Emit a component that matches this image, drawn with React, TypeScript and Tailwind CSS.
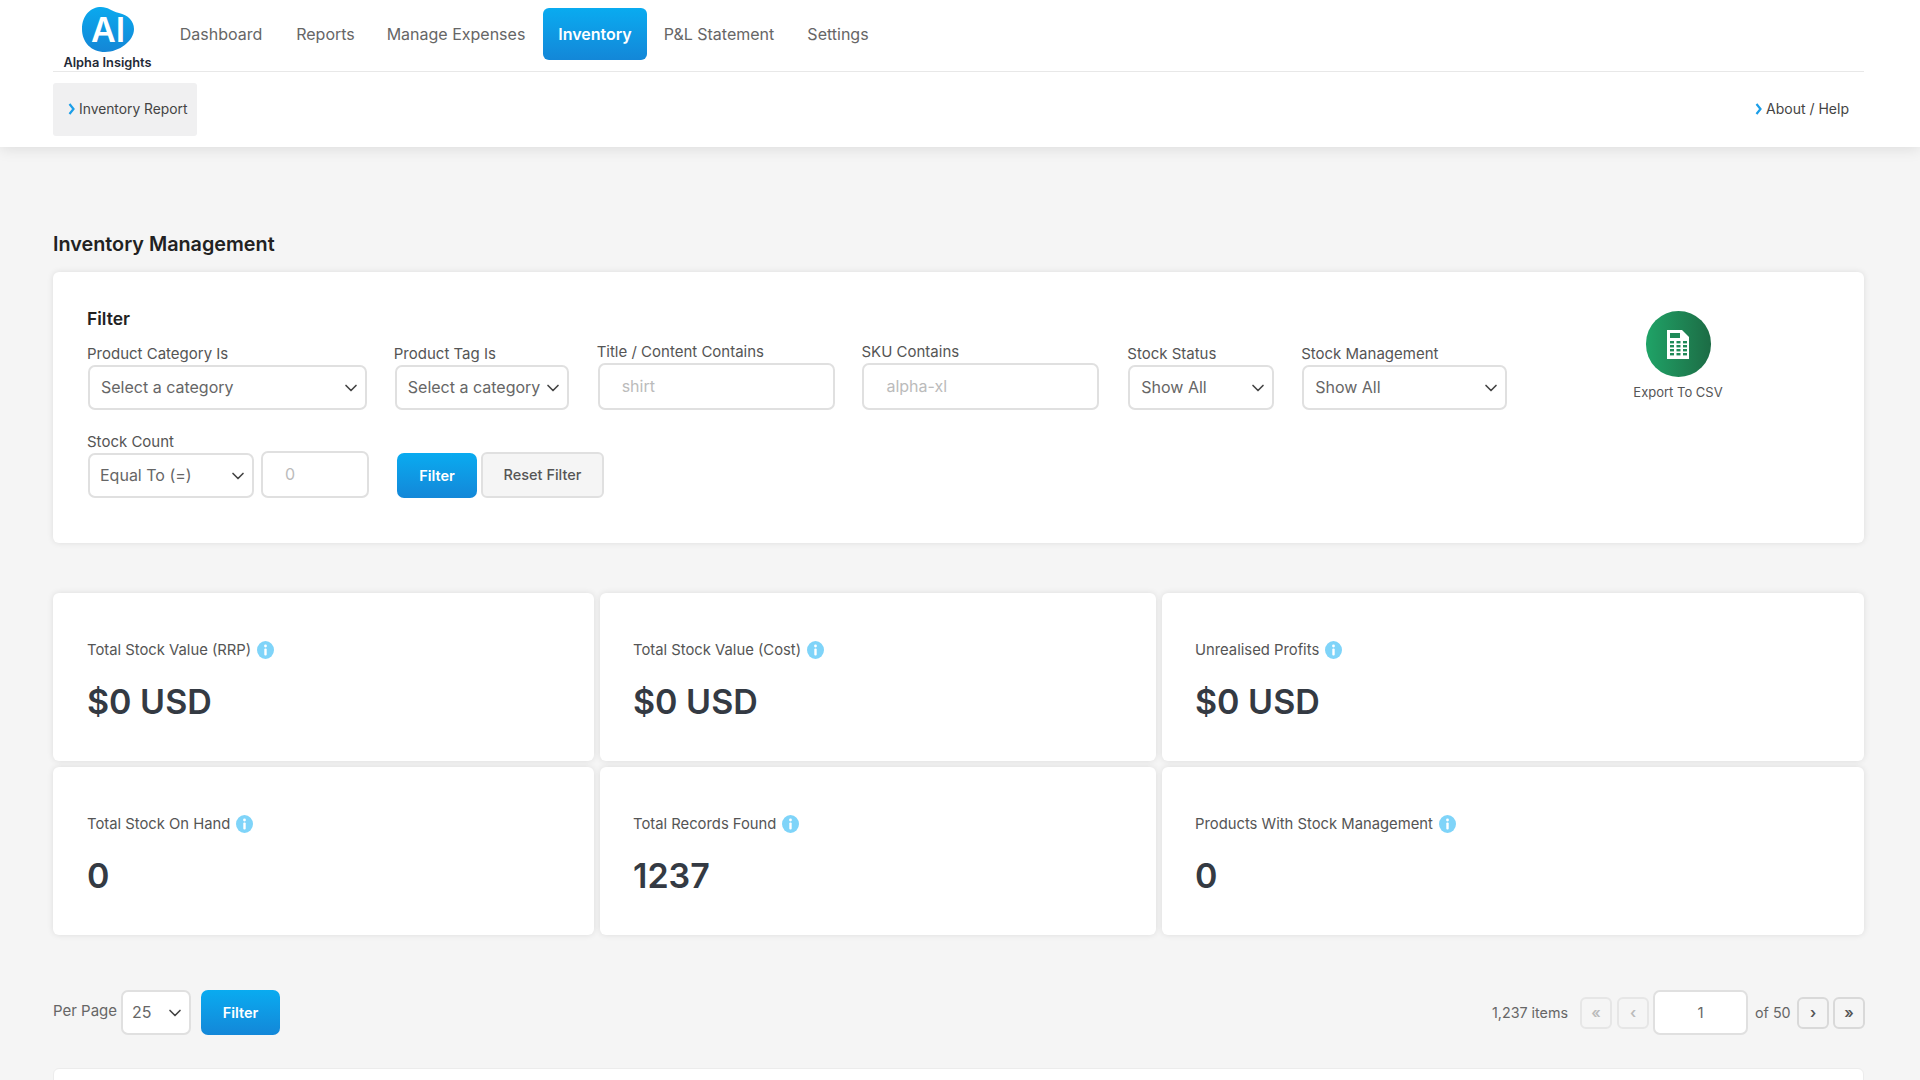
import { ChevronDown } from "lucide-react"

const font = "font-['Inter','Noto_Sans',sans-serif]"

function Logo() {
  return (
    <div className="w-[109px] shrink-0 flex flex-col items-center pt-[7px]">
      <svg width="53" height="45" viewBox="0 0 53 45" className="shrink-0">
        <defs>
          <linearGradient id="blob" x1="0" y1="0" x2="0" y2="1">
            <stop offset="0" stopColor="#0aa9ee" />
            <stop offset="1" stopColor="#1486d6" />
          </linearGradient>
        </defs>
        <path d="M1 22C1 8 10 0 20 0c7 0 10 4 18 6 9 2 15 8 15 16 0 12-15 23-29 23C10 45 1 35 1 22z" fill="url(#blob)" />
        <text x="27" y="35" textAnchor="middle" fontFamily="Inter, sans-serif" fontSize="34" fontWeight="600" fill="#fff">AI</text>
      </svg>
      <span className="mt-[2px] shrink-0 text-[12.8px] leading-[18px] font-semibold text-[#1f2a37] whitespace-nowrap">Alpha Insights</span>
    </div>
  )
}

function Caret() {
  return (
    <svg width="7" height="12" viewBox="0 0 7 12" className="shrink-0 mr-[4px]">
      <path d="M1.5 1l4 5-4 5" fill="none" stroke="#1b9ee8" strokeWidth="2.2" />
    </svg>
  )
}

function Label({ children }: { children: string }) {
  return <div className="-ml-px h-5 mb-px text-[15px] leading-5 text-[#555] whitespace-nowrap">{children}</div>
}

function Select({ value, className }: { value: string; className: string }) {
  return (
    <div className={`relative h-[45px] rounded-[7px] border-2 border-[#e0e0e0] bg-white flex items-center pb-[2px] ${className}`}>
      <span className="text-[16px] text-[#666] whitespace-nowrap">{value}</span>
      <ChevronDown size={20} strokeWidth={2} className="absolute right-[4px] top-[11px] text-[#444]" />
    </div>
  )
}

function TextInput({ placeholder, className }: { placeholder: string; className: string }) {
  return (
    <input
      placeholder={placeholder}
      className={`h-[47px] rounded-[7px] border-2 border-[#e0e0e0] bg-white text-[16px] pb-[2px] outline-none placeholder:text-[#bbb] ${className}`}
    />
  )
}

function BlueButton({ className }: { className: string }) {
  return (
    <button className={`rounded-[7px] bg-gradient-to-b from-[#09abf0] to-[#1387d8] text-white text-[14.5px] font-semibold ${className}`}>
      Filter
    </button>
  )
}

function Info() {
  return (
    <svg width="17" height="18" viewBox="0 0 17 18" className="shrink-0">
      <ellipse cx="8.5" cy="9" rx="8.5" ry="9" fill="#7fd4f9" />
      <circle cx="8.5" cy="5" r="1.4" fill="#fff" />
      <rect x="7.3" y="7.6" width="2.4" height="7" rx="1" fill="#fff" />
    </svg>
  )
}

function Stat({ label, value, className }: { label: string; value: string; className: string }) {
  return (
    <div className={`h-[168px] rounded-[6px] bg-white shadow-[0_0_6px_rgba(0,0,0,0.1)] pt-[47px] ${className}`}>
      <div className="h-5 flex items-center gap-[6px] text-[14.8px] text-[#555]">
        <span className="whitespace-nowrap">{label}</span>
        <Info />
      </div>
      <div className="mt-[22px] h-10 leading-10 text-[34px] font-semibold text-[#343a43]">{value}</div>
    </div>
  )
}

function PageBtn({ glyph, faded }: { glyph: string; faded?: boolean }) {
  return (
    <button
      className={`w-8 h-8 rounded-[6px] border-2 text-[15px] font-semibold leading-none ${
        faded ? "border-[#e6e6e6] text-[#bbb]" : "border-[#d9d9d9] text-[#555]"
      }`}
    >
      {glyph}
    </button>
  )
}

export default function App() {
  const navItems = [
    { name: "Dashboard", w: "w-[118px]" },
    { name: "Reports", w: "w-[91px]" },
    { name: "Manage Expenses", w: "w-[170px]" },
  ]

  return (
    <div className={`w-[1920px] h-[1080px] overflow-hidden bg-[#f5f5f5] ${font}`}>
      {/* Header */}
      <header className="h-[147px] bg-white shadow-[0_2px_14px_rgba(0,0,0,0.1)] pl-[53px] pr-[56px]">
        <div className="h-[72px] flex border-b border-[#e8e8e8]">
          <Logo />
          <nav className="flex items-start pt-[8px] text-[16px] text-[#666]">
            {navItems.map((item) => (
              <a key={item.name} className={`${item.w} h-[52px] flex items-center justify-center whitespace-nowrap`}>
                {item.name}
              </a>
            ))}
            <a className="ml-[2px] w-[104px] h-[52px] rounded-[6px] bg-gradient-to-b from-[#09abf0] to-[#1387d8] text-white font-semibold flex items-center justify-center">
              Inventory
            </a>
            <a className="w-[144px] h-[52px] flex items-center justify-center whitespace-nowrap">P&amp;L Statement</a>
            <a className="w-[94px] h-[52px] flex items-center justify-center">Settings</a>
          </nav>
        </div>
        <div className="flex justify-between pt-[11px]">
          <div className="w-[144px] h-[53px] rounded-[3px] bg-[#f0f0f1] flex items-center pl-[15px] pb-[1px] text-[13.8px] text-[#444] whitespace-nowrap">
            <Caret />
            Inventory Report
          </div>
          <div className="h-[53px] flex items-center pr-[15px] pb-[2px] text-[14px] text-[#444] whitespace-nowrap">
            <Caret />
            About / Help
          </div>
        </div>
      </header>

      <main className="pl-[53px] pr-[56px]">
        <h1 className="mt-[83px] h-7 leading-7 text-[19.8px] font-semibold text-[#222]">Inventory Management</h1>

        {/* Filter card */}
        <section className="mt-[14px] rounded-[6px] bg-white shadow-[0_0_6px_rgba(0,0,0,0.1)] flex pl-[34px] pb-[45px]">
          <div className="w-[1420px] pt-[35px]">
            <h2 className="h-6 leading-6 text-[17.5px] font-semibold text-[#222]">Filter</h2>
            <div className="mt-[11px] pl-px flex items-end">
              <div className="w-[279px]">
                <Label>Product Category Is</Label>
                <Select value="Select a category" className="pl-[11px]" />
              </div>
              <div className="ml-[28px] w-[174px]">
                <Label>Product Tag Is</Label>
                <Select value="Select a category" className="pl-[11px]" />
              </div>
              <div className="ml-[29px] w-[238px]">
                <Label>Title / Content Contains</Label>
                <TextInput placeholder="shirt" className="w-full pl-[22px]" />
              </div>
              <div className="ml-[27px] w-[237px]">
                <Label>SKU Contains</Label>
                <TextInput placeholder="alpha-xl" className="w-full pl-[22px]" />
              </div>
              <div className="ml-[29px] w-[146px]">
                <Label>Stock Status</Label>
                <Select value="Show All" className="pl-[11px]" />
              </div>
              <div className="ml-[28px] w-[205px]">
                <Label>Stock Management</Label>
                <Select value="Show All" className="pl-[11px]" />
              </div>
            </div>
            <div className="mt-[22px] pl-px flex items-end">
              <div className="w-[166px]">
                <Label>Stock Count</Label>
                <Select value="Equal To (=)" className="pl-[10px]" />
              </div>
              <TextInput placeholder="0" className="ml-[7px] w-[108px] pl-[22px]" />
              <BlueButton className="ml-[28px] w-[80px] h-[45px]" />
              <button className="ml-[4px] w-[123px] h-[46px] rounded-[6px] border-2 border-[#e0e0e0] bg-[#f5f5f5] text-[14.5px] font-medium text-[#555]">
                Reset Filter
              </button>
            </div>
          </div>
          <div className="ml-[111px] w-[120px] pt-[39px] flex flex-col items-center">
            <div className="w-[65px] h-[66px] rounded-full bg-gradient-to-r from-[#1fa367] to-[#1c6c45] flex items-center justify-center">
              <svg width="22" height="29" viewBox="0 0 22 29">
                <path d="M0 0h15l7 7v22H0z" fill="#fff" />
                <rect x="3" y="3" width="10" height="5" fill="#1f8a58" />
                {[11, 15, 19, 23].map((y) =>
                  [3, 9.5, 16].map((x) => <rect key={`${x}-${y}`} x={x} y={y} width="4" height="2.4" fill="#1f8a58" />)
                )}
              </svg>
            </div>
            <span className="mt-[5px] h-5 leading-5 text-[13px] text-[#555] whitespace-nowrap">Export To CSV</span>
          </div>
        </section>

        {/* Stats */}
        <section className="mt-[50px] grid grid-cols-[541px_556px_702px] gap-[6px]">
          <Stat label="Total Stock Value (RRP)" value="$0 USD" className="pl-[34px]" />
          <Stat label="Total Stock Value (Cost)" value="$0 USD" className="pl-[33px]" />
          <Stat label="Unrealised Profits" value="$0 USD" className="pl-[33px]" />
          <Stat label="Total Stock On Hand" value="0" className="pl-[34px]" />
          <Stat label="Total Records Found" value="1237" className="pl-[33px]" />
          <Stat label="Products With Stock Management" value="0" className="pl-[33px]" />
        </section>

        {/* Pagination */}
        <section className="mt-[55px] h-[45px] flex items-center justify-between">
          <div className="flex items-center">
            <span className="w-[62px] pb-[3px] text-[15px] text-[#666] whitespace-nowrap">Per Page</span>
            <Select value="25" className="ml-[6px] w-[70px] pl-[9px]" />
            <BlueButton className="ml-[10px] w-[79px] h-[45px]" />
          </div>
          <div className="-mr-px flex items-center text-[14.3px] text-[#666]">
            <span className="mr-[12px] whitespace-nowrap">1,237 items</span>
            <PageBtn glyph="«" faded />
            <span className="w-[5px]" />
            <PageBtn glyph="‹" faded />
            <input
              defaultValue="1"
              className="ml-[4px] w-[95px] h-[45px] rounded-[7px] border-2 border-[#e0e0e0] bg-white text-center text-[15px] text-[#666] outline-none"
            />
            <span className="mx-[7px] w-[35px] text-center whitespace-nowrap">of 50</span>
            <PageBtn glyph="›" />
            <span className="w-[4px]" />
            <PageBtn glyph="»" />
          </div>
        </section>

        <div className="mt-[33px] h-[60px] rounded-[6px] bg-white border border-[#ececec]" />
      </main>
    </div>
  )
}
